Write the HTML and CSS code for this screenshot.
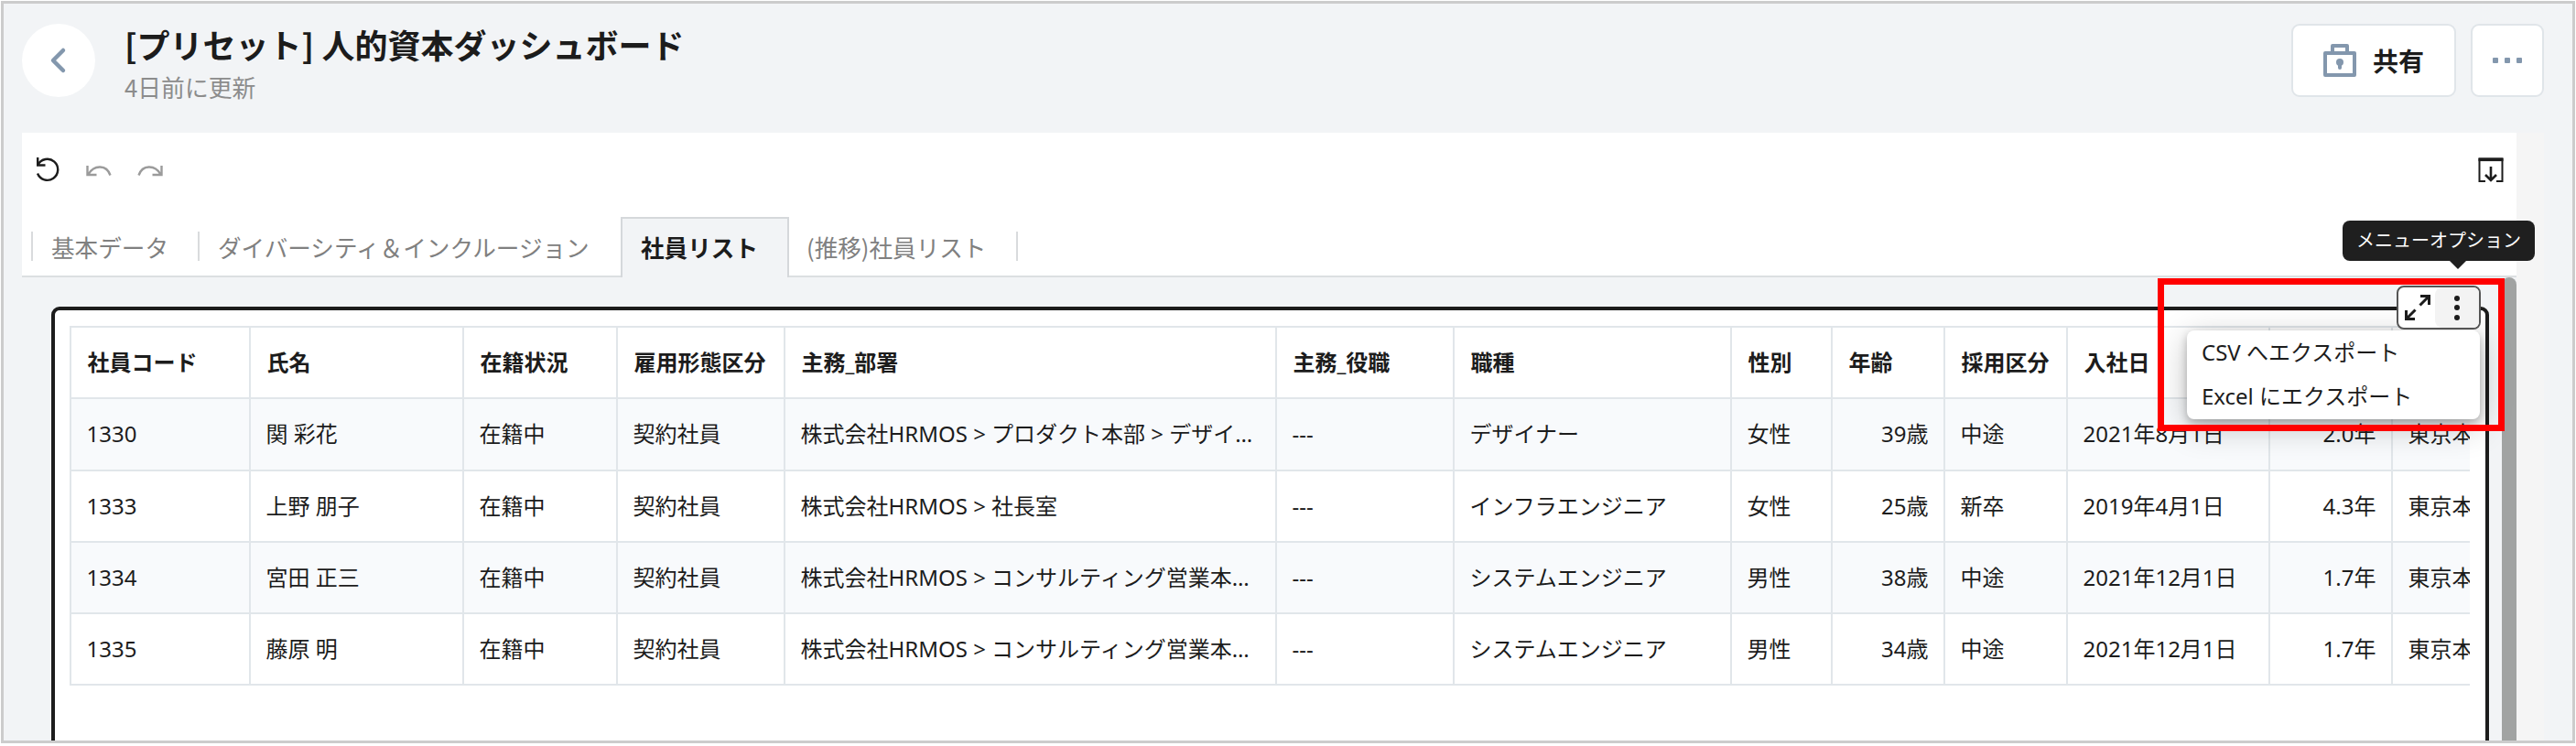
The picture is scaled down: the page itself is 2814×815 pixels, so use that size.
FILE: index.html
```html
<!DOCTYPE html>
<html lang="ja">
<head>
<meta charset="utf-8">
<title>人的資本ダッシュボード</title>
<link rel="stylesheet" href="styles.css">
</head>
<body>
<div class="frame">
  <header class="header">
    <button class="back" aria-label="戻る"><svg width="80" height="80" viewBox="0 0 80 80"><path d="M45 29L34 40L45 51" fill="none" stroke="#8397ad" stroke-width="4.500" stroke-linecap="round" stroke-linejoin="round"/></svg></button>
    <div class="titles">
      <h1 class="title">[プリセット] 人的資本ダッシュボード</h1>
      <p class="updated">4日前に更新</p>
    </div>
    <div class="actions">
      <button class="btn share"><svg width="36" height="36" viewBox="0 0 36 36"><path d="M2 10H34V34H2ZM10 10V2H26V10" fill="none" stroke="#8397ad" stroke-width="4" stroke-linejoin="round"/><circle cx="18" cy="20" r="4" fill="#8397ad"/><path d="M18 20V26" stroke="#8397ad" stroke-width="4" stroke-linecap="round"/></svg><span>共有</span></button>
      <button class="btn more" aria-label="その他"><i></i><i></i><i></i></button>
    </div>
  </header>
  <main class="embed">
    <div class="sheet">
      <div class="toolbar">
        <svg class="ic" width="26" height="28" viewBox="0 0 26 28"><path d="M1.200 0V8.500H9.500M1.500 8A11.500 11.500 0 1 1 1 17.500" fill="none" stroke="#1c1c1c" stroke-width="2.400"/></svg>
        <svg class="ic undo" width="28" height="14" viewBox="0 0 28 14"><path d="M1.500 1V11H11.500M2.500 10.500C9 -.5 22.500 0 26.500 11.500" fill="none" stroke="#9b9b9b" stroke-width="2.400"/></svg>
        <svg class="ic redo" width="28" height="14" viewBox="0 0 28 14"><path d="M26.500 1V11H16.500M25.500 10.500C19 -.5 5.500 0 1.500 11.500" fill="none" stroke="#9b9b9b" stroke-width="2.400"/></svg>
        <svg class="ic export" width="28" height="28" viewBox="0 0 28 28"><path d="M8 26H1.500V2H26.500V26H20" fill="none" stroke="#1c1c1c" stroke-width="2"/><path d="M.5 2.200H27.500" stroke="#1c1c1c" stroke-width="3.800"/><path d="M14 10V25M8 19L14 25L20 19" fill="none" stroke="#1c1c1c" stroke-width="2.600"/></svg>
      </div>
      <nav class="tabs">
        <a class="tab t1">基本データ</a><a class="tab t2">ダイバーシティ＆インクルージョン</a><a class="tab active">社員リスト</a><a class="tab t4">(推移)社員リスト</a><span class="rest"></span>
      </nav>
      <div class="canvas">
        <section class="panel">
          <div class="clip">
          <table class="grid">
            <colgroup><col class="c1"><col class="c2"><col class="c3"><col class="c4"><col class="c5"><col class="c6"><col class="c7"><col class="c8"><col class="c9"><col class="c10"><col class="c11"><col class="c12"><col class="c13"></colgroup>
            <thead><tr><th>社員コード</th><th>氏名</th><th>在籍状況</th><th>雇用形態区分</th><th>主務_部署</th><th>主務_役職</th><th>職種</th><th>性別</th><th>年齢</th><th>採用区分</th><th>入社日</th><th></th><th></th></tr></thead>
            <tbody>
            <tr><td>1330</td><td>関 彩花</td><td>在籍中</td><td>契約社員</td><td>株式会社HRMOS &gt; プロダクト本部 &gt; デザイ…</td><td>---</td><td>デザイナー</td><td>女性</td><td class="num">39歳</td><td>中途</td><td>2021年8月1日</td><td class="num">2.0年</td><td>東京本</td></tr>
            <tr><td>1333</td><td>上野 朋子</td><td>在籍中</td><td>契約社員</td><td>株式会社HRMOS &gt; 社長室</td><td>---</td><td>インフラエンジニア</td><td>女性</td><td class="num">25歳</td><td>新卒</td><td>2019年4月1日</td><td class="num">4.3年</td><td>東京本</td></tr>
            <tr><td>1334</td><td>宮田 正三</td><td>在籍中</td><td>契約社員</td><td>株式会社HRMOS &gt; コンサルティング営業本…</td><td>---</td><td>システムエンジニア</td><td>男性</td><td class="num">38歳</td><td>中途</td><td>2021年12月1日</td><td class="num">1.7年</td><td>東京本</td></tr>
            <tr><td>1335</td><td>藤原 明</td><td>在籍中</td><td>契約社員</td><td>株式会社HRMOS &gt; コンサルティング営業本…</td><td>---</td><td>システムエンジニア</td><td>男性</td><td class="num">34歳</td><td>中途</td><td>2021年12月1日</td><td class="num">1.7年</td><td>東京本</td></tr>
            </tbody>
          </table>
          </div>
        </section>
        <div class="scrollbar"></div>
      </div>
    </div>
  </main>
</div>
<div class="menu"><div>CSV へエクスポート</div><div>Excel にエクスポート</div></div>
<div class="tools">
  <svg width="28" height="28" viewBox="0 0 28 28"><path d="M17 1.500H26.500V11M26 2L16.500 11.500M1.500 17V26.500H11M2 26L11.500 16.500" fill="none" stroke="#1c1c1c" stroke-width="3"/></svg>
  <span class="kebab"><i></i><i></i><i></i></span>
</div>
<div class="tooltip">メニューオプション</div>
<div class="highlight"></div>
</body>
</html>
```
FILE: styles.css
```css
* { box-sizing: border-box; }
body { margin: 0; width: 2814px; height: 815px; overflow: hidden; position: relative; background: #fff; color: #1c1c1c; font-family: "Noto Sans", "Noto Sans CJK JP", sans-serif; }
button { font: inherit; color: inherit; padding: 0; }
i { display: block; }
.frame { margin: 1px 1px 0 1px; height: 811px; border: 3px solid #ccc; background: #f2f4f6; overflow: hidden; display: flex; flex-direction: column; }
.header { height: 141px; flex: none; padding: 22px 31px 0 20px; display: flex; align-items: flex-start; }
.back { width: 80px; height: 80px; border: 0; border-radius: 50%; background: #fff; }
.back svg { display: block; }
.titles { margin: -2px 0 0 32px; }
.title { margin: 0; font: 700 36px/48px "Noto Sans CJK JP", sans-serif; white-space: nowrap; }
.updated { margin: 7px 0 0; font: 400 25.800px/32px "Noto Sans CJK JP", sans-serif; color: #8c8c8c; }
.actions { margin-left: auto; display: flex; gap: 16px; }
.btn { height: 80px; border: 2px solid #e0e5e9; border-radius: 9px; background: #fff; display: flex; align-items: center; justify-content: center; }
.share { width: 180px; gap: 18px; font: 700 28px/40px "Noto Sans CJK JP", sans-serif; }
.more { width: 80px; gap: 7px; }
.more i { width: 6px; height: 6px; border-radius: 1px; background: #8397ad; }
.embed { flex: 1; margin-left: 20px; width: 2755px; background: #f5f5f5; }
.sheet { width: 2725px; height: 100%; background: #fff; display: flex; flex-direction: column; }
.toolbar { height: 92px; flex: none; padding: 27px 14px 0 16px; display: flex; align-items: flex-start; }
.undo { margin: 8px 0 0 28px; }
.redo { margin: 8px 0 0 28px; }
.export { margin-left: auto; }
.tabs { height: 66px; flex: none; display: flex; font: 400 25.600px/66px "Noto Sans CJK JP", sans-serif; color: #808080; }
.tab { white-space: nowrap; flex: none; border-bottom: 2px solid #dcdfe1; position: relative; }
.t1 { width: 193px; padding-left: 32px; }
.t2 { width: 461px; padding-left: 21px; }
.t1::before, .t2::before, .t4::after { content: ""; position: absolute; top: 16px; width: 2px; height: 32px; background: #d9dbdd; }
.t1::before { left: 10px; }
.t2::before { left: -1px; }
.t4::after { right: 0; }
.active { width: 184px; border: 2px solid #d5d8db; border-bottom: 0; background: #f2f4f6; color: #1c1c1c; font-weight: 700; padding-left: 20px; line-height: 62px; }
.t4 { width: 250px; padding-left: 19px; }
.rest { flex: 1; border-bottom: 2px solid #dcdfe1; }
.canvas { flex: 1; background: #f2f4f6; display: flex; padding-left: 32px; justify-content: space-between; }
.panel { margin-top: 32px; width: 2663px; height: 700px; border: 4px solid #1c1c1c; border-radius: 9px; background: #fff; padding: 17px 0 0 16px; }
.clip { width: 2622px; overflow: hidden; }
.grid { table-layout: fixed; width: 2628px; border-collapse: collapse; font-size: 24px; font-weight: 400; line-height: 36px; }
.grid th, .grid td { border: 2px solid #e1e6ea; height: 78.300px; padding: 0 16.500px; text-align: left; white-space: nowrap; overflow: hidden; }
.grid th { font-weight: 700; padding-left: 17.500px; }
.grid .num { text-align: right; }
.grid tbody tr:nth-child(odd) { background: #f8fafc; }
.c1 { width: 196px; } .c2 { width: 233px; } .c3 { width: 168px; } .c4 { width: 183px; } .c5 { width: 537px; } .c6 { width: 194px; } .c7 { width: 303px; } .c8 { width: 110px; } .c9 { width: 123px; } .c10 { width: 134px; } .c11 { width: 221px; } .c12 { width: 134px; }
.c13 { width: 92px; }
.scrollbar { width: 16px; background: #a1a3a2; border-radius: 8px 8px 0 0; }
.menu { position: absolute; left: 2389px; top: 361px; width: 320px; height: 97px; padding: 0 16px; border-radius: 8px; background: #fff; box-shadow: 0 8px 36px rgba(0,0,0,.24), 0 4px 10px rgba(0,0,0,.25); font-size: 24px; font-weight: 400; line-height: 48px; }
.tools { position: absolute; left: 2618px; top: 312px; width: 92px; height: 48px; border: 2px solid #555; border-radius: 8px; background: #fff; display: flex; align-items: center; padding-left: 7px; overflow: hidden; }
.kebab { margin-left: auto; width: 48px; height: 44px; border-radius: 8px 0 0 8px; background: #f3f3f3; display: flex; flex-direction: column; align-items: center; justify-content: center; gap: 4.500px; }
.kebab i { width: 6px; height: 6px; border-radius: 50%; background: #1c1c1c; }
.tooltip { position: absolute; left: 2559px; top: 241px; width: 210px; height: 44px; border-radius: 8px; background: #1f1f1f; color: #fff; text-align: center; font: 400 20px/42px "Noto Sans CJK JP", sans-serif; }
.tooltip::after { content: ""; position: absolute; left: 116px; top: 43px; border: 10px solid transparent; border-top-color: #1f1f1f; border-bottom: 0; }
.highlight { position: absolute; left: 2357px; top: 304px; width: 379px; height: 167px; border: 7px solid #f00; }
```
